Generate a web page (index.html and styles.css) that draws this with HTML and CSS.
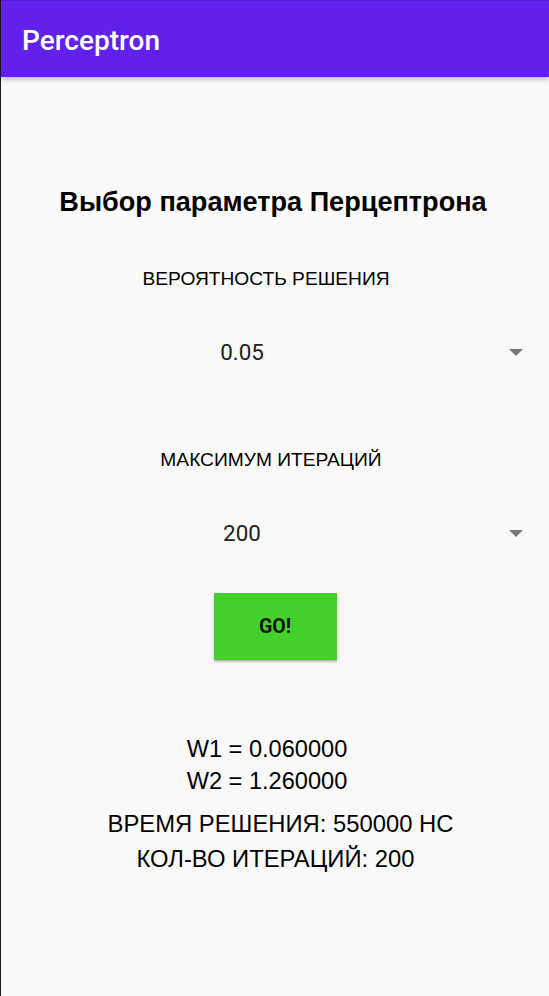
FILE: index.html
```html
<!DOCTYPE html>
<html lang="ru">
<head>
<meta charset="utf-8">
<title>Perceptron</title>
<link rel="stylesheet" href="styles.css">
</head>
<body>
<div class="screen">
  <header class="appbar">
    <h1 class="appbar-title">Perceptron</h1>
  </header>
  <main class="content">
    <h2 class="heading">Выбор параметра Перцептрона</h2>
    <div class="label label-prob">ВЕРОЯТНОСТЬ РЕШЕНИЯ</div>
    <div class="spinner">
      <span class="spinner-value">0.05</span>
      <span class="spinner-arrow"><svg width="14" height="7" viewBox="0 0 14 7"><polygon points="0,0 14,0 7,7" fill="#767676"/></svg></span>
    </div>
    <div class="label label-iter">МАКСИМУМ ИТЕРАЦИЙ</div>
    <div class="spinner spinner-second">
      <span class="spinner-value">200</span>
      <span class="spinner-arrow"><svg width="14" height="7" viewBox="0 0 14 7"><polygon points="0,0 14,0 7,7" fill="#767676"/></svg></span>
    </div>
    <button class="go-button">GO!</button>
    <div class="weights">
      <div>W1 = 0.060000</div>
      <div>W2 = 1.260000</div>
    </div>
    <div class="stats">
      <div class="stat-time">ВРЕМЯ РЕШЕНИЯ: 550000 НС</div>
      <div class="stat-iter">КОЛ-ВО ИТЕРАЦИЙ: 200</div>
    </div>
  </main>
</div>
</body>
</html>
```

FILE: styles.css
```css
html, body {
  margin: 0;
  padding: 0;
  background: #fafafa;
}

.screen {
  min-height: 996px;
  border-left: 1px solid #1a1a1a;
  background: #fafafa;
  display: flex;
  flex-direction: column;
}

.appbar {
  height: 77px;
  border-top: 1px solid #5418d2;
  background: #6221ea;
  box-shadow: 0 2px 5px rgba(0, 0, 0, 0.28);
  display: flex;
  align-items: center;
  padding: 3px 0 0 21px;
  box-sizing: border-box;
  position: relative;
  z-index: 1;
}

.appbar-title {
  margin: 0;
  font-family: Roboto, "Noto Sans", sans-serif;
  font-weight: 500;
  font-size: 28px;
  line-height: 34px;
  color: #ffffff;
}

.content {
  display: flex;
  flex-direction: column;
  align-items: center;
  font-family: "Liberation Sans", Arial, sans-serif;
  color: #000;
}

.heading {
  margin: 109px 0 0 -4px;
  font-size: 27.1px;
  line-height: 32px;
  font-weight: bold;
}

.label {
  font-size: 19.2px;
  line-height: 24px;
}

.label-prob {
  margin: 49px 0 0 -18px;
}

.label-iter {
  margin: 63px 0 0 -8px;
}

.spinner {
  align-self: stretch;
  display: flex;
  height: 66px;
  margin-top: 28px;
}

.spinner-second {
  margin-top: 28px;
}

.spinner-value {
  flex: 1;
  text-align: center;
  font-family: Roboto, "Noto Sans", sans-serif;
  font-size: 22.4px;
  line-height: 66px;
  color: #212121;
}

.spinner-arrow {
  width: 66px;
  display: flex;
  align-items: center;
  justify-content: center;
}

.spinner-arrow svg {
  display: block;
}

.go-button {
  margin-top: 27px;
  width: 123px;
  height: 67px;
  border: none;
  border-radius: 1px;
  background: #45d12b;
  box-shadow: 0 2px 3px rgba(0, 0, 0, 0.22), 0 1px 1px rgba(0, 0, 0, 0.12);
  font-family: Roboto, "Noto Sans", sans-serif;
  font-weight: 700;
  font-size: 19.6px;
  line-height: 67px;
  color: #111111;
  padding: 0;
}

.weights {
  margin: 73px 0 0 -16px;
  font-size: 23.6px;
  line-height: 32px;
  text-align: left;
}

.stats {
  margin-top: 9px;
  font-size: 23.8px;
  line-height: 35px;
  text-align: center;
}

.stat-time {
  padding-left: 11px;
}

.stat-iter {
  padding-left: 1px;
}
```
